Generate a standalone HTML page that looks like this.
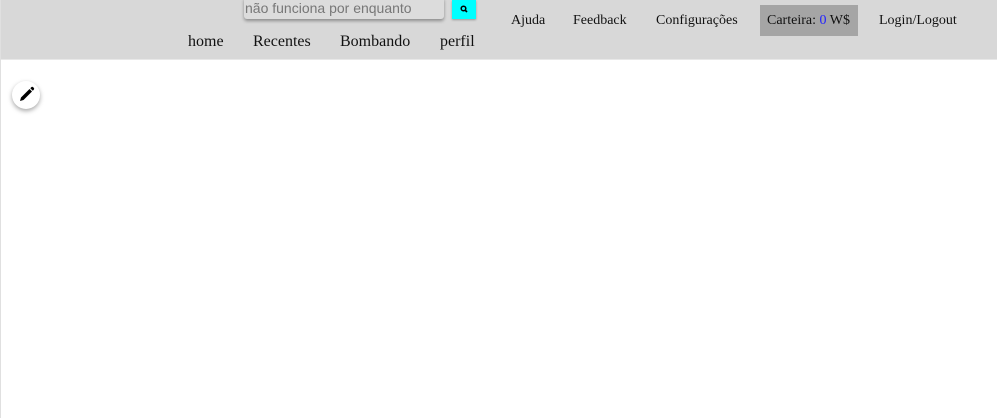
<!DOCTYPE html>
<html><head><meta charset="utf-8"><style>
body{margin:0;width:997px;height:418px;background:#fff;position:relative;overflow:hidden;font-family:"Liberation Serif",serif;border-left:1px solid #e0e0e0;box-sizing:border-box}
.hdr{position:absolute;left:0;top:0;width:997px;height:59px;background:#d8d8d8;border-bottom:1px solid #e8e8e8}
.t{position:absolute;white-space:nowrap;color:#111}
.inp{position:absolute;left:243px;top:-3px;width:200px;height:22px;background:#dcdcdc;border-radius:3px;box-shadow:0 2px 3px rgba(0,0,0,.35);font:14px "Liberation Sans",sans-serif;color:#777;line-height:22px;padding-left:1px;box-sizing:border-box}
.btn{position:absolute;left:451px;top:0;width:24px;height:19px;background:#00ffff;box-shadow:0 1px 2px rgba(0,0,0,.3)}
.nav{font-size:16px;top:33px}
.r{font-size:14px;top:13px}
.wal{position:absolute;left:759px;top:5px;width:98px;height:31px;background:#a5a5a5}
.pen{position:absolute;left:11px;top:81px;width:28px;height:28px;border-radius:50%;background:#fff;box-shadow:0 2px 5px rgba(0,0,0,.35)}
</style></head><body>
<div class="hdr">
<div class="inp">não funciona por enquanto</div>
<div class="btn"><svg width="24" height="19" viewBox="0 0 24 19"><circle cx="11.5" cy="8.5" r="2.3" fill="none" stroke="#000" stroke-width="1.5"/><line x1="13.2" y1="10.2" x2="15" y2="12" stroke="#000" stroke-width="1.7"/></svg></div>
<div class="t nav" style="left:187px">home</div>
<div class="t nav" style="left:252px">Recentes</div>
<div class="t nav" style="left:339px">Bombando</div>
<div class="t nav" style="left:439px">perfil</div>
<div class="t r" style="left:510px">Ajuda</div>
<div class="t r" style="left:572px">Feedback</div>
<div class="t r" style="left:655px">Configurações</div>
<div class="wal"></div>
<div class="t r" style="left:766px">Carteira: <span style="color:#2222ff">0</span> W$</div>
<div class="t r" style="left:878px">Login/Logout</div>
</div>
<div class="pen"><svg width="28" height="28" viewBox="0 0 28 28"><path d="M8 20 L9 16.5 L17.5 8 L20 10.5 L11.5 19 Z" fill="#000"/><path d="M18.3 7.2 L19.5 6 Q20.3 5.4 21 6.1 L21.9 7 Q22.5 7.7 21.9 8.5 L20.8 9.7 Z" fill="#000"/></svg></div>
</body></html>
